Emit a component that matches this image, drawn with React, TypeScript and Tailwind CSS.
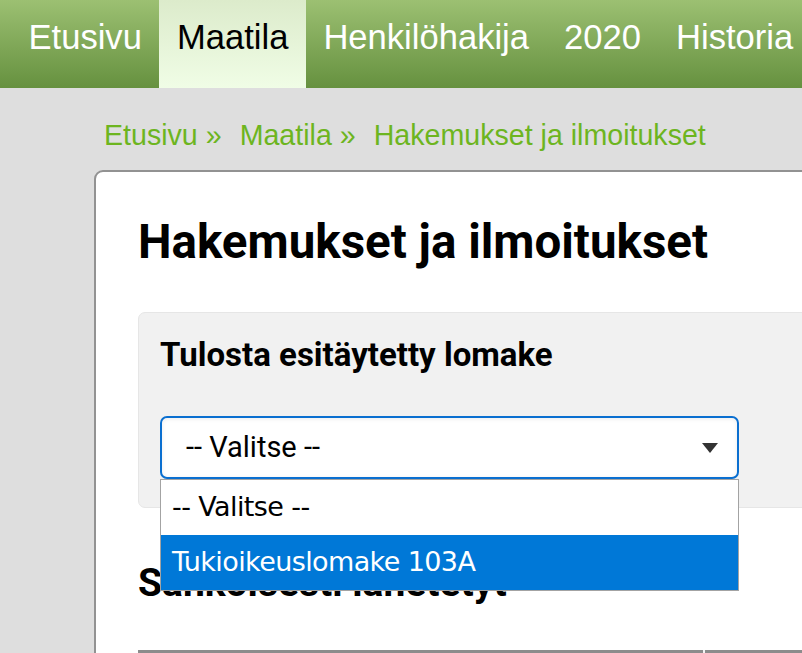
const navItems = ["Etusivu", "Maatila", "Henkilöhakija", "2020", "Historia"];
const crumbs = ["Etusivu", "Maatila"];

const App = () => {
  return (
    <div className="min-h-screen w-full overflow-hidden bg-[#dedede] font-['Roboto',sans-serif]">
      <nav className="flex h-[88px] pl-[11px] bg-gradient-to-b from-[#9cc072] to-[#66913f] font-['Liberation_Sans',Arial,sans-serif] text-[34.6px]">
        {navItems.map((item) => (
          <a
            key={item}
            href="#"
            className={
              item === "Maatila"
                ? "px-[17.5px] pt-[17px] leading-[40px] whitespace-nowrap text-black bg-gradient-to-b from-[#dcebcb] to-[#f0fde6]"
                : "px-[17.5px] pt-[17px] leading-[40px] whitespace-nowrap text-white"
            }
          >
            {item}
          </a>
        ))}
      </nav>

      <div className="pl-[94px]">
        <div className="flex items-start gap-[18px] pt-[31px] pl-[10px] h-[82px] font-['Liberation_Sans',Arial,sans-serif] text-[28.6px] leading-[32px] text-[#6db51f] whitespace-nowrap">
          {crumbs.map((c) => (
            <a key={c} href="#">
              {c} »
            </a>
          ))}
          <a href="#">Hakemukset ja ilmoitukset</a>
        </div>

        <div className="w-[760px] bg-white border-2 border-[#929292] rounded-tl-[9px] p-[42px] pb-0">
          <h1 className="text-[47.5px] leading-[56px] font-bold text-black whitespace-nowrap">
            Hakemukset ja ilmoitukset
          </h1>

          <div className="mt-[42px] bg-[#f1f1f1] border border-[#e6e6e6] rounded-[7px] p-[21px] pt-[23px] h-[196px]">
            <h2 className="text-[33px] leading-[38px] font-bold text-black whitespace-nowrap">
              Tulosta esitäytetty lomake
            </h2>

            <div className="relative mt-[42px] w-[579px]">
              <div className="flex items-center justify-between h-[63px] bg-white border-2 border-[#0a6fd0] rounded-[7px] pl-[24px] pr-[19px] shadow-[inset_0_1px_4px_rgba(0,0,0,0.08)]">
                <span className="text-[29px] text-black">-- Valitse --</span>
                <svg width="16" height="10" viewBox="0 0 16 10">
                  <path d="M0 0 L16 0 L8 10 Z" fill="#333" />
                </svg>
              </div>

              <ul className="absolute left-0 top-[63px] z-10 w-full bg-white border border-[#a3a3a3] font-['DejaVu_Sans',Verdana,sans-serif] text-[27px] tracking-[-0.6px]">
                <li className="flex items-center h-[55px] px-[11px] text-black">-- Valitse --</li>
                <li className="flex items-center h-[55px] px-[11px] text-white bg-[#0078d7]">
                  Tukioikeuslomake 103A
                </li>
              </ul>
            </div>
          </div>

          <h2 className="mt-[51px] text-[39px] leading-[48px] font-bold text-black whitespace-nowrap">
            Sähköisesti lähetetyt
          </h2>

          <div className="mt-[43px] flex h-[40px]">
            <div className="w-[565px] bg-[#8c8c8c]" />
            <div className="w-[2px] bg-[#f4f4f4]" />
            <div className="flex-1 bg-[#8c8c8c]" />
          </div>
        </div>
      </div>
    </div>
  );
};

export default App;
